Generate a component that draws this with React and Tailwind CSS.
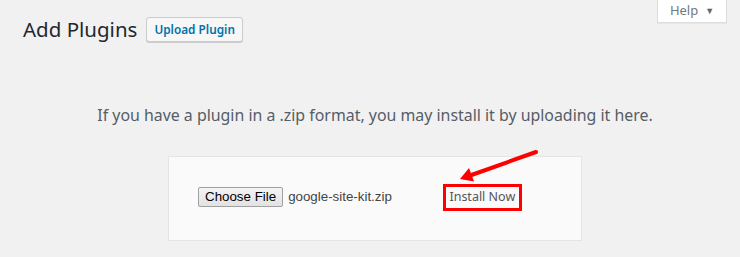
export default function App() {
  return (
    <div className="relative w-[740px] h-[257px] overflow-hidden bg-[#f1f1f1]" style={{ fontFamily: '"Noto Sans", sans-serif' }}>
      <div className="flex justify-between items-start">
        <div className="flex items-center gap-[9px] pl-[23px] pt-[17px]">
          <h1 className="text-[20.5px] leading-[25px] text-[#23282d] font-normal">Add Plugins</h1>
          <button className="h-[25px] px-[7px] border border-[#ccc] bg-[#f7f7f7] text-[#0073aa] text-[11.8px] font-semibold rounded-[3px] shadow-[0_1px_0_#ccc] leading-[23px]">Upload Plugin</button>
        </div>
        <div className="mr-[13px] w-[70px] h-[23px] bg-white border border-t-0 border-[#ddd] shadow-[0_1px_1px_rgba(0,0,0,0.04)] flex items-center justify-center gap-[7px] text-[13px] text-[#72777c]">
          <span>Help</span>
          <span className="text-[9px] text-[#666]">▼</span>
        </div>
      </div>
      <div className="ml-[20px] mr-[10px]">
        <p className="mt-[63px] text-center text-[15.9px] leading-[20px] text-[#555d66]">If you have a plugin in a .zip format, you may install it by uploading it here.</p>
        <div className="relative mx-auto mt-[31px] w-[414px] h-[85px] bg-[#fafafa] border border-[#e5e5e5] flex items-center pl-[29px] pb-[3px]">
          <div className="flex items-center" style={{ fontFamily: '"Liberation Sans", Arial, sans-serif' }}>
            <span className="h-[20px] px-[6px] flex items-center border border-[#a0a0a0] rounded-[2px] bg-gradient-to-b from-[#f4f4f4] to-[#e2e2e2] text-[13.33px] text-black">Choose File</span>
            <span className="ml-[5px] text-[13.33px] text-[#444]">google-site-kit.zip</span>
          </div>
          <div className="ml-[51px] w-[79px] h-[27px] border-[3px] border-[#f00] flex items-center justify-center text-[12.5px] text-[#555]">Install Now</div>
        </div>
      </div>
      <svg className="absolute left-[455px] top-[145px]" width="90" height="40" viewBox="0 0 90 40">
        <line x1="81" y1="7" x2="15" y2="30.5" stroke="#f00" strokeWidth="4" strokeLinecap="round" />
        <polygon points="5,34 19,36.5 14,23" fill="#f00" />
      </svg>
    </div>
  );
}
